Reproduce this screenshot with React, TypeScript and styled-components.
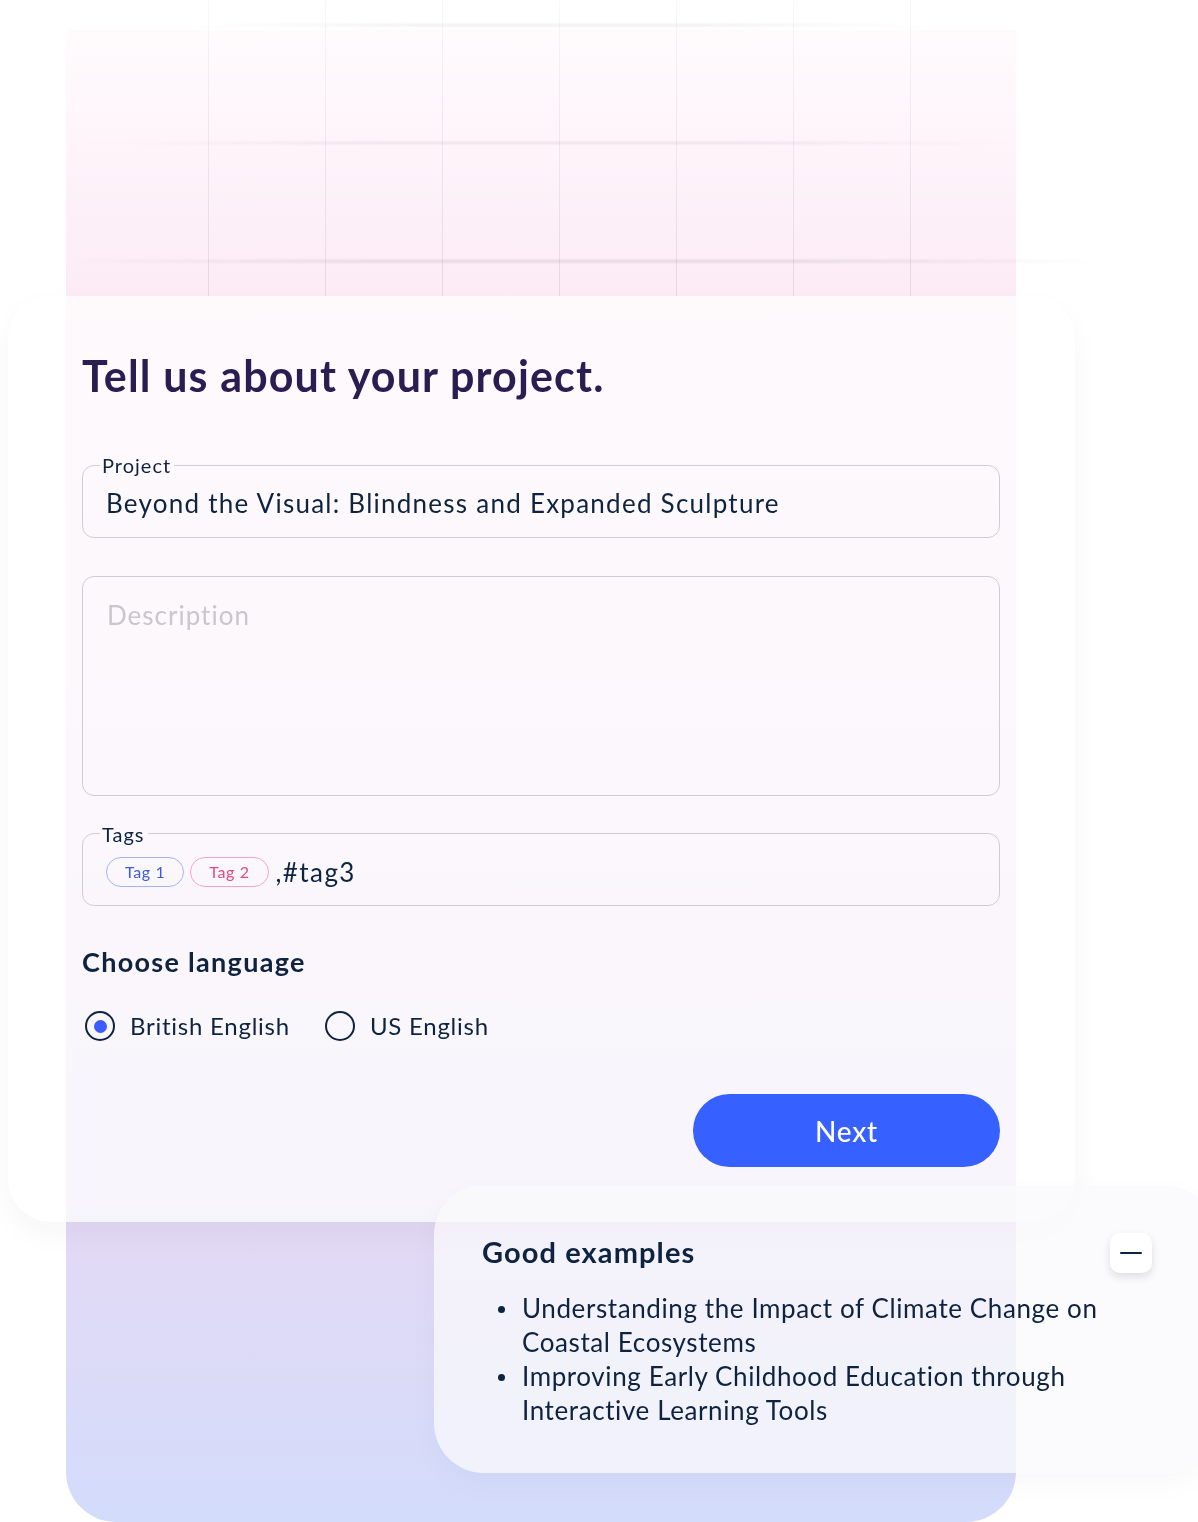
import React from "react";
import styled, { createGlobalStyle } from "styled-components";

const Global = createGlobalStyle`
  html, body { margin: 0; padding: 0; background: #ffffff; }
  body { font-family: Lato, "Noto Sans", sans-serif; color: #0d2340; }
  * { box-sizing: border-box; }
`;

const Stage = styled.div`
  position: relative;
  width: 1198px;
  height: 1522px;
  overflow: hidden;
  background: #ffffff;
`;

const Backdrop = styled.div`
  position: absolute;
  left: 66px;
  top: 30px;
  width: 950px;
  bottom: 0;
  border-radius: 0 0 50px 50px;
  background: linear-gradient(
    180deg,
    #fffbfd 0px,
    #fcebf5 266px,
    #f3e3f4 700px,
    #e3d9f4 1192px,
    #d3dcfb 100%
  );
`;

const GridArt = styled.svg`
  position: absolute;
  left: 0;
  top: 0;
  width: 1198px;
  height: 300px;
  pointer-events: none;
`;

const FormCard = styled.section`
  position: absolute;
  left: 8px;
  top: 296px;
  width: 1067px;
  height: 926px;
  border-radius: 44px;
  background: rgba(255, 255, 255, 0.72);
  box-shadow: 0 12px 30px rgba(40, 30, 80, 0.04);
  padding: 52px 75px 0 74px;
  display: flex;
  flex-direction: column;
`;

const Title = styled.h1`
  margin: 0;
  font-family: Lato, sans-serif;
  font-weight: 700;
  font-size: 43px;
  line-height: 56px;
  color: #2b1c52;
  letter-spacing: 1.15px;
`;

const Fieldset = styled.fieldset<{ $top: number }>`
  margin: ${(p) => p.$top}px 0 0 0;
  padding: 8px 18px 15.5px 18px;
  border: 1.5px solid #cfcdd3;
  border-radius: 12px;
  min-width: 0;
`;

const Legend = styled.legend`
  padding: 0 3px 0 2px;
  margin-left: -1px;
  font-size: 20px;
  line-height: 24px;
  letter-spacing: 1px;
  color: #0d2340;
`;

const Value = styled.div`
  padding-left: 5px;
  font-size: 26px;
  line-height: 36px;
  letter-spacing: 1.25px;
  color: #0d2340;
  display: flex;
  align-items: center;
  gap: 6px;
`;

const DescriptionBox = styled.div`
  margin-top: 38px;
  height: 220px;
  border: 1.5px solid #cfcdd3;
  border-radius: 12px;
  padding: 20px 24px;
  font-size: 26px;
  line-height: 36px;
  letter-spacing: 1px;
  color: #cbc6cc;
`;

const Chip = styled.span<{ $tone: "blue" | "pink" }>`
  display: inline-flex;
  align-items: center;
  height: 30px;
  padding: 0 18px;
  border-radius: 15px;
  font-size: 16px;
  letter-spacing: 0.6px;
  border: 1.5px solid ${(p) => (p.$tone === "blue" ? "#a4b2f5" : "#f2a6c0")};
  color: ${(p) => (p.$tone === "blue" ? "#3b5bdb" : "#e14a80")};
`;

const TagText = styled.span`
  margin-left: 1px;
  font-size: 26px;
  letter-spacing: 1.4px;
`;

const SectionTitle = styled.h2`
  margin: 38px 0 0 0;
  font-weight: 700;
  font-size: 27px;
  line-height: 36px;
  letter-spacing: 1.3px;
  color: #0d2340;
`;

const RadioRow = styled.div`
  margin-top: 29px;
  display: flex;
  align-items: center;
  gap: 35px;
  padding-left: 3px;
`;

const RadioOption = styled.label`
  display: flex;
  align-items: center;
  gap: 15px;
  font-size: 24px;
  line-height: 34px;
  letter-spacing: 0.75px;
  color: #0d2340;
`;

const RadioCircle = styled.span<{ $checked?: boolean }>`
  width: 30px;
  height: 30px;
  border-radius: 50%;
  border: 2.5px solid #0d2340;
  display: flex;
  align-items: center;
  justify-content: center;
  &::after {
    content: "";
    width: 13px;
    height: 13px;
    border-radius: 50%;
    background: ${(p) => (p.$checked ? "#3d5cff" : "transparent")};
  }
`;

const Actions = styled.div`
  margin-top: 51px;
  display: flex;
  justify-content: flex-end;
`;

const NextButton = styled.button`
  width: 307px;
  height: 73px;
  border: none;
  border-radius: 37px;
  background: #3660ff;
  color: #ffffff;
  font-family: Lato, sans-serif;
  font-size: 28px;
  font-weight: 500;
  letter-spacing: 0.8px;
`;

const ExamplesCard = styled.aside`
  position: absolute;
  left: 434px;
  top: 1185px;
  width: 780px;
  height: 288px;
  border-radius: 50px;
  background: rgba(250, 250, 252, 0.75);
  box-shadow: 0 10px 30px rgba(40, 30, 80, 0.03);
  padding: 48px 0 0 48px;
`;

const ExamplesHeader = styled.div`
  display: flex;
  align-items: flex-start;
  justify-content: space-between;
  width: 670px;
`;

const ExamplesTitle = styled.h3`
  margin: 0;
  font-weight: 700;
  font-size: 29px;
  line-height: 38px;
  letter-spacing: 1.1px;
  color: #0d2340;
`;

const CollapseButton = styled.button`
  width: 42px;
  height: 40px;
  border: none;
  border-radius: 10px;
  background: #ffffff;
  box-shadow: 0 4px 8px rgba(20, 20, 40, 0.12);
  display: flex;
  align-items: center;
  justify-content: center;
  padding: 0;
  &::after {
    content: "";
    width: 22px;
    height: 2.5px;
    border-radius: 1px;
    background: #0d2340;
  }
`;

const List = styled.ul`
  margin: 18px 0 0 0;
  padding: 0 0 0 40px;
  width: 650px;
  list-style: none;
  font-size: 26px;
  line-height: 34px;
  letter-spacing: 0.6px;
  color: #0d2340;
`;

const Item = styled.li`
  position: relative;
  &::before {
    content: "";
    position: absolute;
    left: -24px;
    top: 15px;
    width: 7px;
    height: 7px;
    border-radius: 50%;
    background: #0d2340;
  }
`;

export default function App() {
  const vx = [208, 325, 442, 559, 676, 793, 910];
  return (
    <>
      <Global />
      <Stage>
        <Backdrop />
        <GridArt viewBox="0 0 1198 300">
          <defs>
            <linearGradient id="h1" x1="0" x2="1" y1="0" y2="0">
              <stop offset="0" stopColor="#b9b2bd" stopOpacity="0" />
              <stop offset="0.3" stopColor="#b9b2bd" stopOpacity="0.4" />
              <stop offset="0.7" stopColor="#b9b2bd" stopOpacity="0.4" />
              <stop offset="1" stopColor="#b9b2bd" stopOpacity="0" />
            </linearGradient>
            <linearGradient id="v1" x1="0" x2="0" y1="0" y2="1">
              <stop offset="0" stopColor="#c8c0cc" stopOpacity="0.12" />
              <stop offset="1" stopColor="#c8c0cc" stopOpacity="0.45" />
            </linearGradient>
            <filter id="soft" x="-5%" y="-200%" width="110%" height="500%">
              <feGaussianBlur stdDeviation="0.8" />
            </filter>
          </defs>
          {vx.map((x) => (
            <rect key={x} x={x} y={0} width={1} height={296} fill="url(#v1)" />
          ))}
          <g filter="url(#soft)">
            <rect x={200} y={24} width={720} height={2} fill="url(#h1)" opacity={0.6} />
            <rect x={120} y={142} width={880} height={2} fill="url(#h1)" opacity={0.8} />
            <rect x={70} y={260} width={1030} height={2.5} fill="url(#h1)" />
          </g>
        </GridArt>

        <FormCard>
          <Title>Tell us about your project.</Title>
          <Fieldset $top={49}>
            <Legend>Project</Legend>
            <Value>Beyond the Visual: Blindness and Expanded Sculpture</Value>
          </Fieldset>
          <DescriptionBox>Description</DescriptionBox>
          <Fieldset $top={26}>
            <Legend>Tags</Legend>
            <Value>
              <Chip $tone="blue">Tag 1</Chip>
              <Chip $tone="pink">Tag 2</Chip>
              <TagText>,#tag3</TagText>
            </Value>
          </Fieldset>
          <SectionTitle>Choose language</SectionTitle>
          <RadioRow>
            <RadioOption>
              <RadioCircle $checked />
              British English
            </RadioOption>
            <RadioOption>
              <RadioCircle />
              US English
            </RadioOption>
          </RadioRow>
          <Actions>
            <NextButton>Next</NextButton>
          </Actions>
        </FormCard>

        <ExamplesCard>
          <ExamplesHeader>
            <ExamplesTitle>Good examples</ExamplesTitle>
            <CollapseButton aria-label="Collapse" />
          </ExamplesHeader>
          <List>
            <Item>Understanding the Impact of Climate Change on Coastal Ecosystems</Item>
            <Item>Improving Early Childhood Education through Interactive Learning Tools</Item>
          </List>
        </ExamplesCard>
      </Stage>
    </>
  );
}
